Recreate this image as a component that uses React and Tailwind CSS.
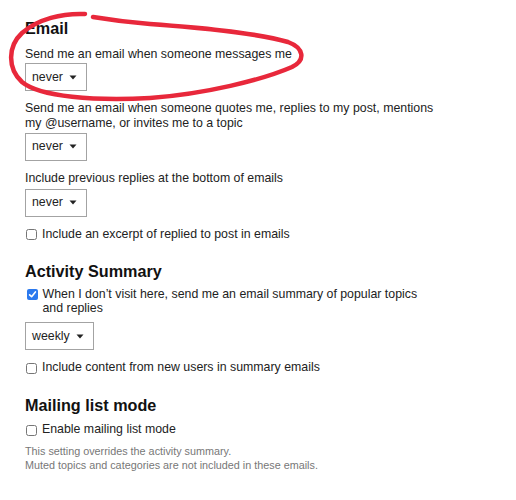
import React from "react";

function Select({ label }) {
  return (
    <div className="flex h-[28px] w-fit items-center border border-[#a3a3a3] bg-white pl-[6px] pr-[9px]">
      <span className="whitespace-nowrap">{label}</span>
      <svg className="ml-[6px]" width="8" height="5" viewBox="0 0 8 5">
        <path d="M0.5 0.5 L7.5 0.5 L4 4.5 Z" fill="#222" />
      </svg>
    </div>
  );
}

function Checkbox({ checked, children }) {
  return (
    <div className="flex items-start">
      {checked ? (
        <div className="ml-[2px] mt-[2.5px] flex h-[10.5px] w-[10.5px] shrink-0 items-center justify-center rounded-[2px] bg-[#2b79ee]">
          <svg width="9" height="9" viewBox="0 0 9 9">
            <path d="M1.6 4.8 L3.6 6.7 L7.4 1.9" fill="none" stroke="white" strokeWidth="1.6" strokeLinecap="round" strokeLinejoin="round" />
          </svg>
        </div>
      ) : (
        <div className="ml-[1px] mt-[2.5px] h-[11px] w-[11px] shrink-0 rounded-[2.5px] border border-[#767676] bg-white" />
      )}
      <div className="ml-[5px] whitespace-nowrap">{children}</div>
    </div>
  );
}

export default function App() {
  return (
    <div
      className="relative h-[500px] w-[516px] overflow-hidden bg-white text-[#222]"
      style={{ fontFamily: '"Liberation Sans", Arial, sans-serif' }}
    >
      <div className="pl-[25px] pt-[19px] text-[12.35px] leading-[14.5px]">
        <h2 className="text-[16.2px] font-bold leading-[19px] text-[#111]">Email</h2>
        <div className="mt-[8.5px] whitespace-nowrap">Send me an email when someone messages me</div>
        <div className="mt-[2px]">
          <Select label="never" />
        </div>
        <div className="mt-[10px] whitespace-nowrap">
          Send me an email when someone quotes me, replies to my post, mentions
          <br />
          my @username, or invites me to a topic
        </div>
        <div className="mt-[2.5px]">
          <Select label="never" />
        </div>
        <div className="mt-[10px] whitespace-nowrap">Include previous replies at the bottom of emails</div>
        <div className="mt-[3.5px]">
          <Select label="never" />
        </div>
        <div className="mt-[10px]">
          <Checkbox>Include an excerpt of replied to post in emails</Checkbox>
        </div>

        <h2 className="mt-[20.5px] text-[16.2px] font-bold leading-[19px] text-[#111]">Activity Summary</h2>
        <div className="mt-[6px]">
          <Checkbox checked>
            When I don’t visit here, send me an email summary of popular topics
            <br />
            and replies
          </Checkbox>
        </div>
        <div className="mt-[6.5px]">
          <Select label="weekly" />
        </div>
        <div className="mt-[10px]">
          <Checkbox>Include content from new users in summary emails</Checkbox>
        </div>

        <h2 className="mt-[21px] text-[16.2px] font-bold leading-[19px] text-[#111]">Mailing list mode</h2>
        <div className="mt-[7.5px]">
          <Checkbox>Enable mailing list mode</Checkbox>
        </div>
        <div className="mt-[7px] text-[10.8px] leading-[14.3px] text-[#777]">
          This setting overrides the activity summary.
          <br />
          Muted topics and categories are not included in these emails.
        </div>
      </div>

      <svg
        className="pointer-events-none absolute left-0 top-0"
        width="516"
        height="500"
        viewBox="0 0 516 500"
      >
        <path
          d="M85 14 C62 13 38 19 22 33 C8 46 7 68 22 82 C40 97 95 101 150 98 C205 94 262 80 292 67 C306 60 304 48 288 42 C255 32 190 27 150 24 C125 22 105 19 93 17"
          fill="none"
          stroke="#e8283b"
          strokeWidth="4.5"
          strokeLinecap="round"
          strokeLinejoin="round"
        />
      </svg>
    </div>
  );
}
